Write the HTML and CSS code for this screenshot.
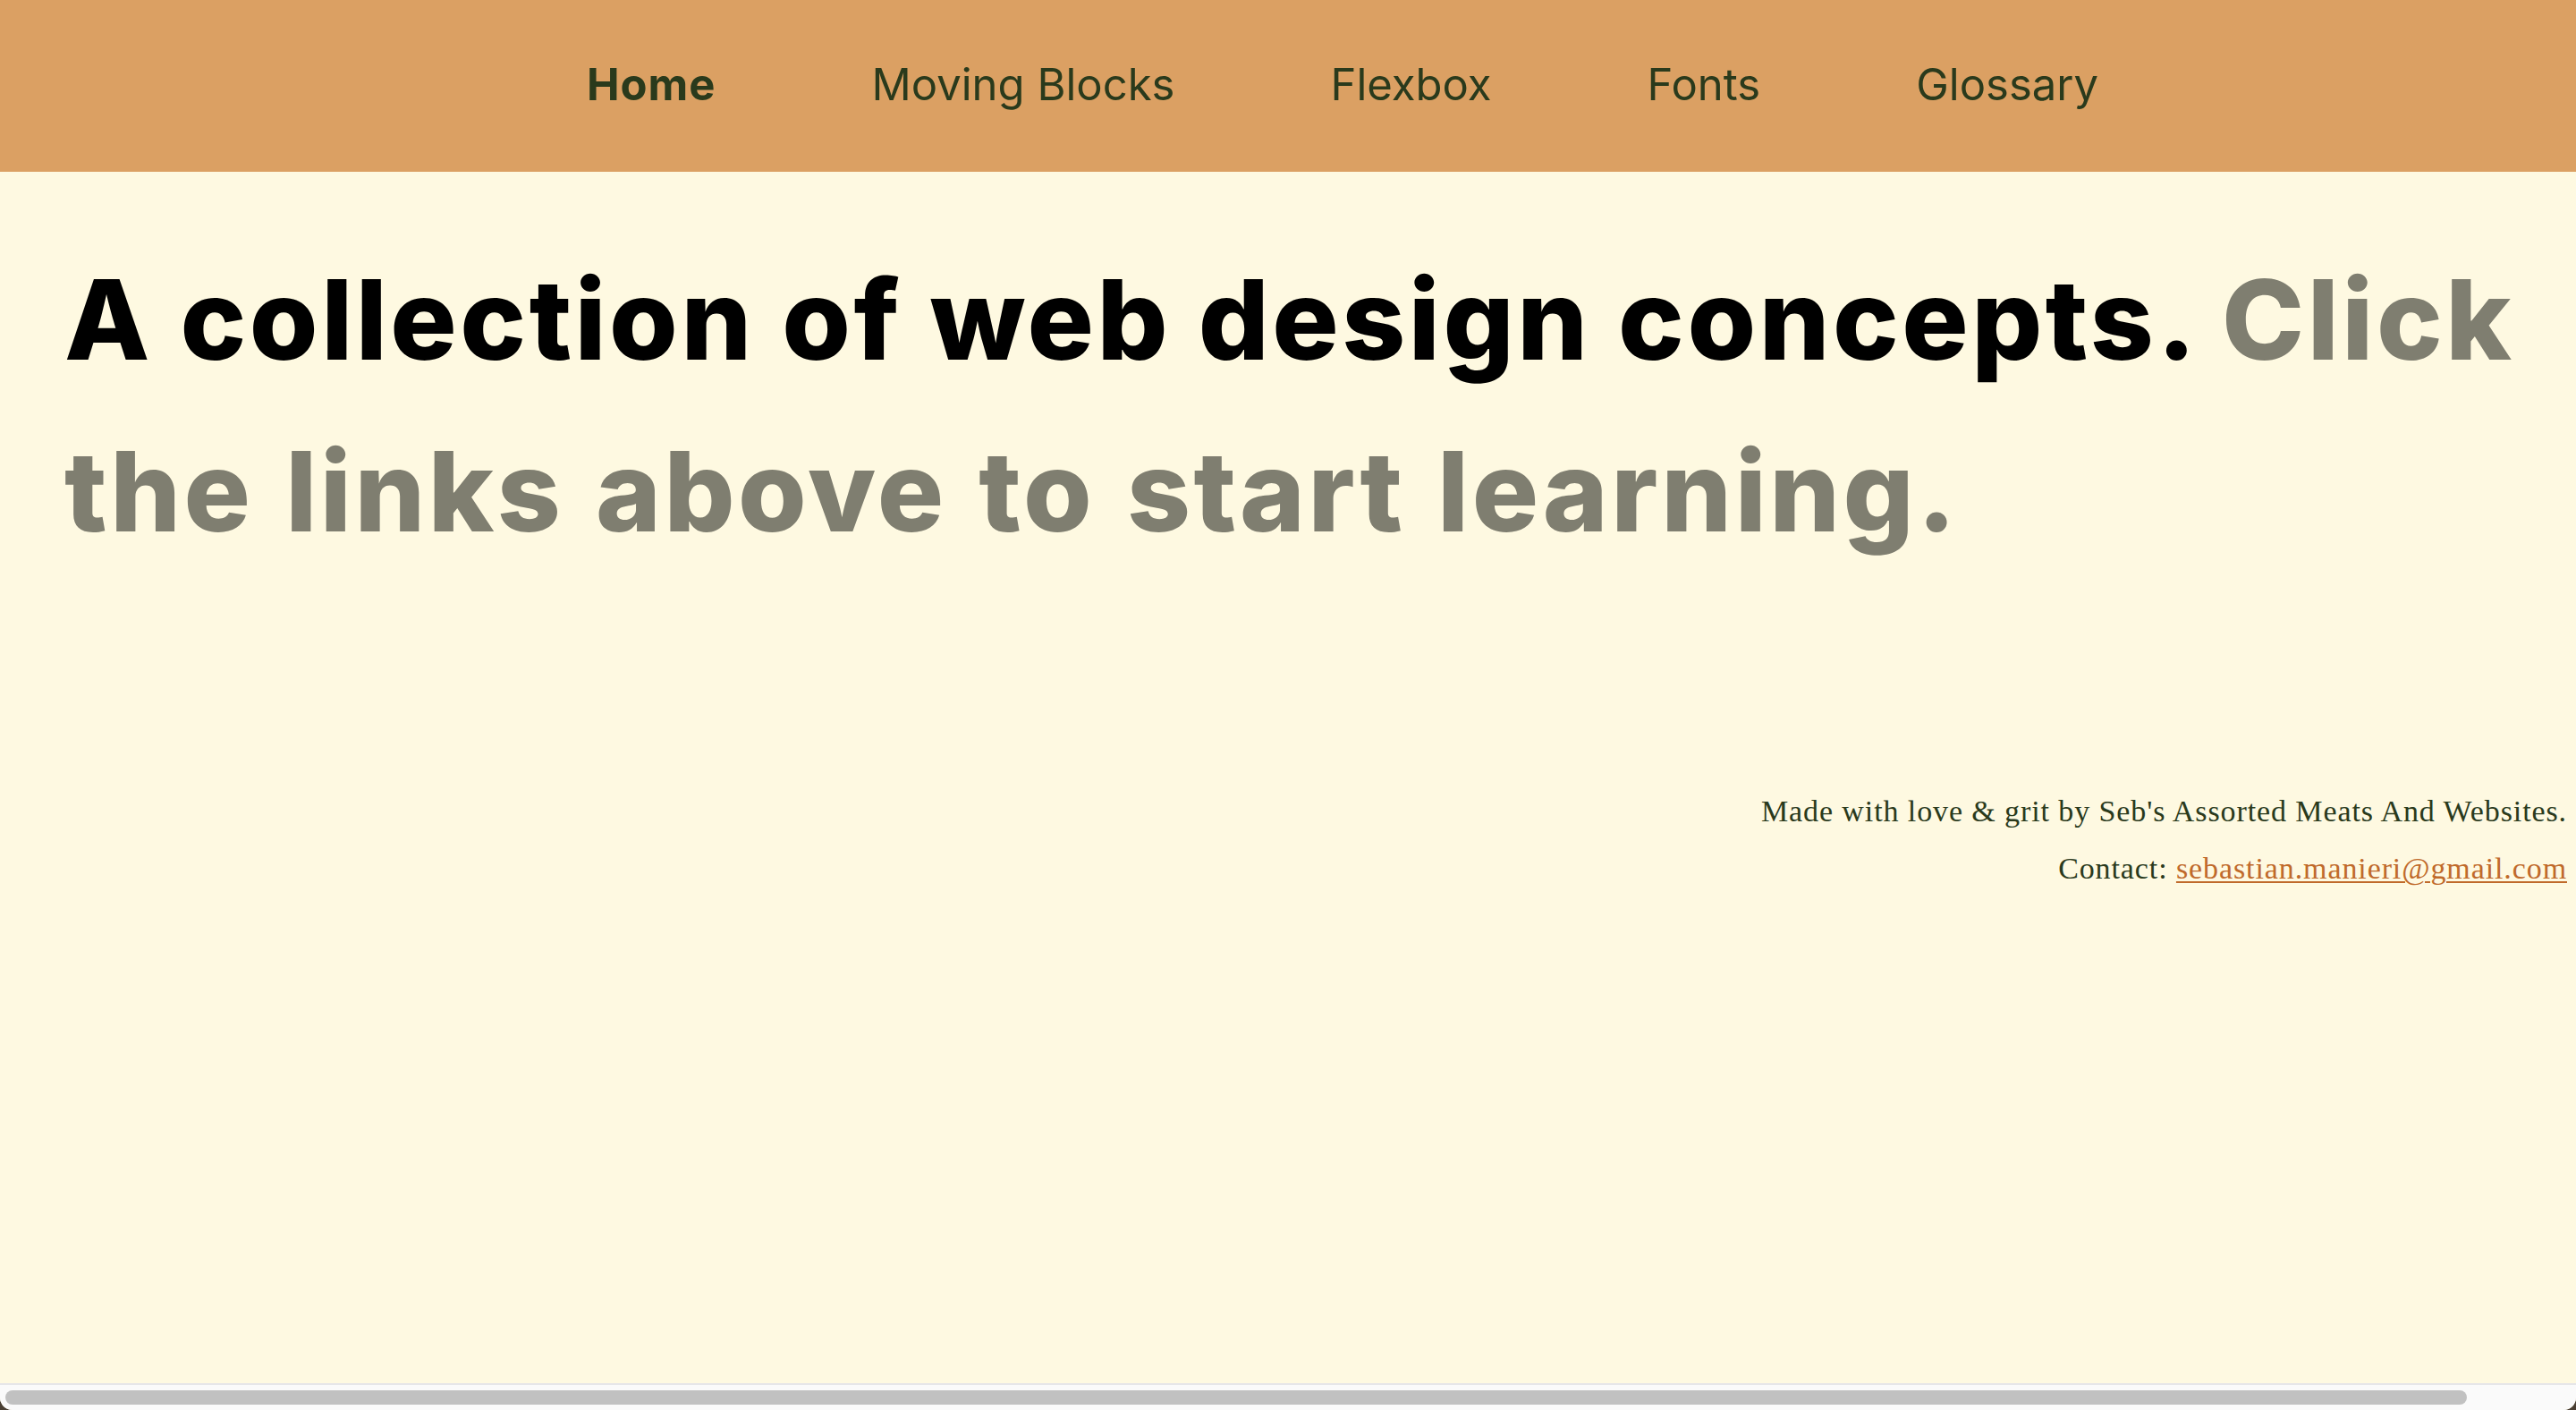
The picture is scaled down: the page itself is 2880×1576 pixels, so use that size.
FILE: index.html
```html
<!DOCTYPE html>
<html lang="en">
<head>
<meta charset="utf-8">
<title>Web Design Concepts</title>
<link rel="stylesheet" href="styles.css">
</head>
<body>
<div class="window">
  <nav class="topnav">
    <ul class="nav-list">
      <li><a class="nav-link active" href="#">Home</a></li>
      <li><a class="nav-link" href="#">Moving Blocks</a></li>
      <li><a class="nav-link" href="#">Flexbox</a></li>
      <li><a class="nav-link" href="#">Fonts</a></li>
      <li><a class="nav-link" href="#">Glossary</a></li>
    </ul>
  </nav>
  <main class="content">
    <h1 class="headline">A collection of web design concepts. <span class="muted">Click the links above to start learning.</span></h1>
  </main>
  <footer class="footer">
    <p class="footer-line">Made with love &amp; grit by Seb's Assorted Meats And Websites.</p>
    <p class="footer-line">Contact: <a class="footer-link" href="#">sebastian.manieri@gmail.com</a></p>
  </footer>
  <div class="hscroll">
    <div class="hscroll-thumb"></div>
  </div>
</div>
</body>
</html>
```

FILE: styles.css
```css
html, body {
  margin: 0;
  padding: 0;
  height: 100%;
  background: #4a3f33;
  overflow: hidden;
}

.window {
  height: 100vh;
  display: flex;
  flex-direction: column;
  background: #fef9e1;
  border-radius: 0 0 14px 14px;
  overflow: hidden;
}

.topnav {
  height: 192px;
  flex: none;
  background: #dba063;
  display: flex;
  align-items: center;
  justify-content: center;
  padding-left: 122px;
}

.nav-list {
  list-style: none;
  margin: 0;
  padding: 0;
  display: flex;
  gap: 174px;
  margin-top: -4px;
}

.nav-link {
  font-family: Inter, "Open Sans", sans-serif;
  font-size: 49px;
  font-weight: 400;
  color: #2a3a1c;
  text-decoration: none;
}

.nav-link.active {
  font-weight: 700;
  letter-spacing: 1px;
}

.content {
  padding: 0 40px 0 72px;
}

.headline {
  margin: 69px 0 0;
  font-family: Inter, "Open Sans", sans-serif;
  font-size: 124px;
  font-weight: 800;
  line-height: 192px;
  color: #000;
  letter-spacing: 3.5px;
}

.muted {
  color: #7f7e70;
  word-spacing: 5px;
}

.footer {
  margin-top: 230px;
  padding-right: 10px;
  text-align: right;
}

.footer-line {
  margin: 0;
  font-family: "Liberation Serif", serif;
  font-size: 34px;
  line-height: 64px;
  letter-spacing: 0.9px;
  color: #2a3a1c;
}

.footer-link {
  color: #c06a2b;
  text-decoration: underline;
  text-decoration-thickness: 2px;
  text-underline-offset: 3px;
}

.hscroll {
  margin-top: auto;
  flex: none;
  border-top: 2px solid #e6e6e8;
  background: #fafafa;
  padding: 6px 122px 6px 6px;
  box-sizing: border-box;
  height: 30px;
}

.hscroll-thumb {
  height: 16px;
  background: #c1c1c1;
  border-radius: 8px;
}
```
